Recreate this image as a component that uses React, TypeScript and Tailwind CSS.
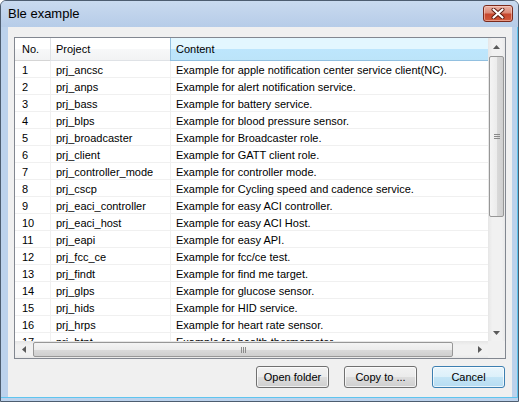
import React from "react";

const ROWS: [string, string, string][] = [
  ["1", "prj_ancsc", "Example for apple notification center service client(NC)."],
  ["2", "prj_anps", "Example for alert notification service."],
  ["3", "prj_bass", "Example for battery service."],
  ["4", "prj_blps", "Example for blood pressure sensor."],
  ["5", "prj_broadcaster", "Example for Broadcaster role."],
  ["6", "prj_client", "Example for GATT client role."],
  ["7", "prj_controller_mode", "Example for controller mode."],
  ["8", "prj_cscp", "Example for Cycling speed and cadence service."],
  ["9", "prj_eaci_controller", "Example for easy ACI controller."],
  ["10", "prj_eaci_host", "Example for easy ACI Host."],
  ["11", "prj_eapi", "Example for easy API."],
  ["12", "prj_fcc_ce", "Example for fcc/ce test."],
  ["13", "prj_findt", "Example for find me target."],
  ["14", "prj_glps", "Example for glucose sensor."],
  ["15", "prj_hids", "Example for HID service."],
  ["16", "prj_hrps", "Example for heart rate sensor."],
  ["17", "prj_htpt", "Example for health thermometer."],
];

function Arrow({ dir }: { dir: "up" | "down" | "left" | "right" }) {
  const pts = {
    up: "0,4 3.5,0 7,4",
    down: "0,0 7,0 3.5,4",
    left: "4,0 4,7 0,3.5",
    right: "0,0 0,7 4,3.5",
  }[dir];
  const vert = dir === "up" || dir === "down";
  return (
    <svg width={vert ? 7 : 4} height={vert ? 4 : 7} viewBox={vert ? "0 0 7 4" : "0 0 4 7"}>
      <polygon points={pts} fill="#5a5a5a" />
    </svg>
  );
}

function Btn({ label, primary }: { label: string; primary?: boolean }) {
  return (
    <button
      type="button"
      className={`flex h-[22px] w-[73px] items-center justify-center rounded-[3px] border text-[11px] text-black shadow-[inset_0_0_0_1px_rgba(255,255,255,0.7)] ${
        primary
          ? "border-[#3c7fb1] bg-[linear-gradient(to_bottom,#e9f5fc_0%,#dcf0fa_50%,#c4e5f6_51%,#b6dcf2_100%)]"
          : "border-[#707070] bg-[linear-gradient(to_bottom,#f2f2f2_0%,#ebebeb_50%,#dddddd_51%,#cfcfcf_100%)]"
      }`}
    >
      {label}
    </button>
  );
}

export default function App() {
  return (
    <div className="flex h-[402px] w-[519px] flex-col overflow-hidden rounded-t-[6px] border border-[#4d5d70] bg-[#bcd2ec] font-['Liberation_Sans',Arial,sans-serif] text-[11px] text-black">
      {/* title bar */}
      <div className="flex h-[26px] shrink-0 justify-between bg-[linear-gradient(to_bottom,#c9daef,#b6cce8)] pl-[7px] pr-[5px]">
        <span className="self-center pb-[1px] text-[13px]">Ble example</span>
        <div className="mt-[4px] flex h-[17px] w-[30px] items-center justify-center rounded-[3px] border border-[#7b2a1c] bg-[linear-gradient(to_bottom,#eab3a6_0%,#dc8a77_45%,#c7462d_55%,#d15a3c_100%)] shadow-[inset_0_0_0_1px_rgba(255,220,210,0.5)]">
          <svg width="14" height="11" viewBox="0 0 14 11">
            <path d="M2.5 1.5 L11.5 9.5 M11.5 1.5 L2.5 9.5" stroke="#5a1a10" strokeWidth="4" strokeLinecap="round" />
            <path d="M2.5 1.5 L11.5 9.5 M11.5 1.5 L2.5 9.5" stroke="#ffffff" strokeWidth="2.2" strokeLinecap="round" />
          </svg>
        </div>
      </div>

      <div className="flex min-h-0 flex-1">
        <div className="w-[7px] shrink-0" />
        <div className="flex flex-1 flex-col bg-[#f0f0f0] px-[6px] pt-[10px]">
          {/* list view */}
          <div className="flex h-[322px] flex-col border border-[#828790] bg-white">
            <div className="flex h-[303px]">
              <div className="flex w-[473px] flex-col">
                <div className="flex h-[23px] shrink-0">
                  <div className="flex w-[35px] items-center border-b border-[#d5d5d5] bg-[linear-gradient(to_bottom,#ffffff_0%,#ffffff_50%,#f7f8f9_51%,#f2f3f4_100%)] pl-[7px]">
                    No.
                  </div>
                  <div className="flex w-[120px] items-center border-b border-l border-[#dfe2e6] bg-[linear-gradient(to_bottom,#ffffff_0%,#ffffff_50%,#f7f8f9_51%,#f2f3f4_100%)] pl-[5px]">
                    Project
                  </div>
                  <div className="flex flex-1 items-center border-b border-l border-[#92c0e0] bg-[linear-gradient(to_bottom,#e3f7ff_0%,#e3f7ff_50%,#bde6fd_51%,#bce4f9_100%)] pl-[5px]">
                    Content
                  </div>
                </div>
                <div className="flex-1 overflow-hidden">
                  {ROWS.map(([n, p, c]) => (
                    <div key={n} className="flex h-[17px] border-b border-[#f0f0f0] leading-[19px]">
                      <div className="w-[35px] whitespace-nowrap pl-[7px]">{n}</div>
                      <div className="w-[120px] whitespace-nowrap border-l border-[#f0f0f0] pl-[5px]">{p}</div>
                      <div className="flex-1 whitespace-nowrap border-l border-[#f0f0f0] pl-[5px]">{c}</div>
                    </div>
                  ))}
                </div>
              </div>
              {/* vertical scrollbar */}
              <div className="flex w-[17px] flex-col bg-[linear-gradient(to_right,#e6e6e6,#f1f1f1_25%,#f1f1f1_80%,#e9e9e9)]">
                <div className="flex h-[17px] items-center justify-center">
                  <Arrow dir="up" />
                </div>
                <div className="flex-1">
                  <div className="ml-[1px] mt-[1px] flex h-[161px] w-[15px] items-center justify-center rounded-[2px] border border-[#979797] bg-[linear-gradient(to_right,#f4f4f4_0%,#ececec_50%,#dadada_51%,#cfcfcf_100%)]">
                    <div className="flex w-[6px] flex-col gap-[1px]">
                      <div className="h-[1px] bg-[#8a8a8a]" />
                      <div className="h-[1px] bg-[#8a8a8a]" />
                      <div className="h-[1px] bg-[#8a8a8a]" />
                    </div>
                  </div>
                </div>
                <div className="flex h-[17px] items-center justify-center">
                  <Arrow dir="down" />
                </div>
              </div>
            </div>
            {/* horizontal scrollbar */}
            <div className="flex h-[17px]">
              <div className="flex w-[473px] bg-[linear-gradient(to_bottom,#e6e6e6,#f1f1f1_25%,#f1f1f1_80%,#e9e9e9)]">
                <div className="flex w-[17px] items-center justify-center">
                  <Arrow dir="left" />
                </div>
                <div className="flex-1">
                  <div className="ml-[1px] mt-[1px] flex h-[15px] w-[420px] items-center justify-center rounded-[2px] border border-[#979797] bg-[linear-gradient(to_bottom,#f4f4f4_0%,#ececec_50%,#dadada_51%,#cfcfcf_100%)]">
                    <div className="flex h-[6px] gap-[1px]">
                      <div className="w-[1px] bg-[#8a8a8a]" />
                      <div className="w-[1px] bg-[#8a8a8a]" />
                      <div className="w-[1px] bg-[#8a8a8a]" />
                    </div>
                  </div>
                </div>
                <div className="flex w-[17px] items-center justify-center">
                  <Arrow dir="right" />
                </div>
              </div>
              <div className="w-[17px] bg-[#f0f0f0]" />
            </div>
          </div>

          <div className="mt-[7px] flex justify-end gap-[15px] pr-[1px]">
            <Btn label="Open folder" />
            <Btn label="Copy to ..." />
            <Btn label="Cancel" primary />
          </div>
        </div>
        <div className="w-[6px] shrink-0 border-r border-[#5fc5ef]" />
      </div>
      <div className="h-[4px] shrink-0 border-t border-[#5fc5ef]" />
    </div>
  );
}
